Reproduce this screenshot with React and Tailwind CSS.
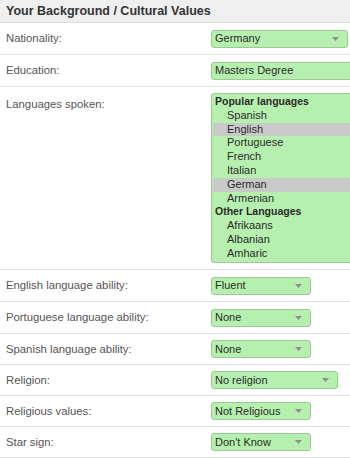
import React from "react";

const Arrow = () => (
  <svg width="7" height="4" viewBox="0 0 7 4" className="shrink-0">
    <polygon points="0,0 7,0 3.5,4" fill="#8f8f8f" />
  </svg>
);

const Select = ({ value, width, arrow = true }) => (
  <div
    className="h-[18px] flex items-center justify-between bg-[#b6f0ae] border border-[#9cca97] rounded-[3px] pl-[3px] pr-[8px] text-[11px] text-[#2b2b2b] shrink-0"
    style={{ width }}
  >
    <span>{value}</span>
    {arrow && <Arrow />}
  </div>
);

const Row = ({ label, children, h = "h-[32px]" }) => (
  <div className={`flex items-center border-b border-[#e2e2e2] ${h}`}>
    <div className="w-[211px] shrink-0 pl-[6px] text-[11.3px] text-[#555]">{label}</div>
    {children}
  </div>
);

const languages = [
  { group: "Popular languages" },
  { name: "Spanish" },
  { name: "English", selected: true },
  { name: "Portuguese" },
  { name: "French" },
  { name: "Italian" },
  { name: "German", selected: true },
  { name: "Armenian" },
  { group: "Other Languages" },
  { name: "Afrikaans" },
  { name: "Albanian" },
  { name: "Amharic" },
];

export default function App() {
  return (
    <div className="w-[350px] h-[459px] overflow-hidden bg-white [font-family:'Liberation_Sans',Arial,sans-serif]">
      <div className="h-[23px] flex items-center px-[6px] bg-[#efefef] border-b border-[#dcdcdc] text-[12.5px] font-bold text-[#333]">
        Your Background / Cultural Values
      </div>

      <Row label="Nationality:">
        <Select value="Germany" width={137} />
      </Row>
      <Row label="Education:">
        <Select value="Masters Degree" width={142} arrow={false} />
      </Row>

      <div className="flex border-b border-[#e2e2e2] h-[183px]">
        <div className="w-[211px] shrink-0 pl-[6px] pt-[9px] text-[11.3px] text-[#555]">Languages spoken:</div>
        <div className="mt-[6px] w-[142px] h-[170px] shrink-0 bg-[#b6f0ae] border border-[#9cca97] rounded-[3px] pt-[1px] pl-[1px] text-[11px] text-[#2b2b2b] leading-[13.8px]">
          {languages.map((l, i) =>
            l.group ? (
              <div key={i} className="pl-[2px] font-bold text-[10.5px]">{l.group}</div>
            ) : (
              <div key={i} className={`pl-[14px] ${l.selected ? "bg-[#c9c9c9]" : ""}`}>{l.name}</div>
            )
          )}
        </div>
      </div>

      <Row label="English language ability:">
        <Select value="Fluent" width={100} />
      </Row>
      <Row label="Portuguese language ability:">
        <Select value="None" width={100} />
      </Row>
      <Row label="Spanish language ability:" h="h-[31px]">
        <Select value="None" width={100} />
      </Row>
      <Row label="Religion:" h="h-[31px]">
        <Select value="No religion" width={127} />
      </Row>
      <Row label="Religious values:" h="h-[31px]">
        <Select value="Not Religious" width={100} />
      </Row>
      <Row label="Star sign:" h="h-[31px]">
        <Select value="Don't Know" width={100} />
      </Row>
    </div>
  );
}
